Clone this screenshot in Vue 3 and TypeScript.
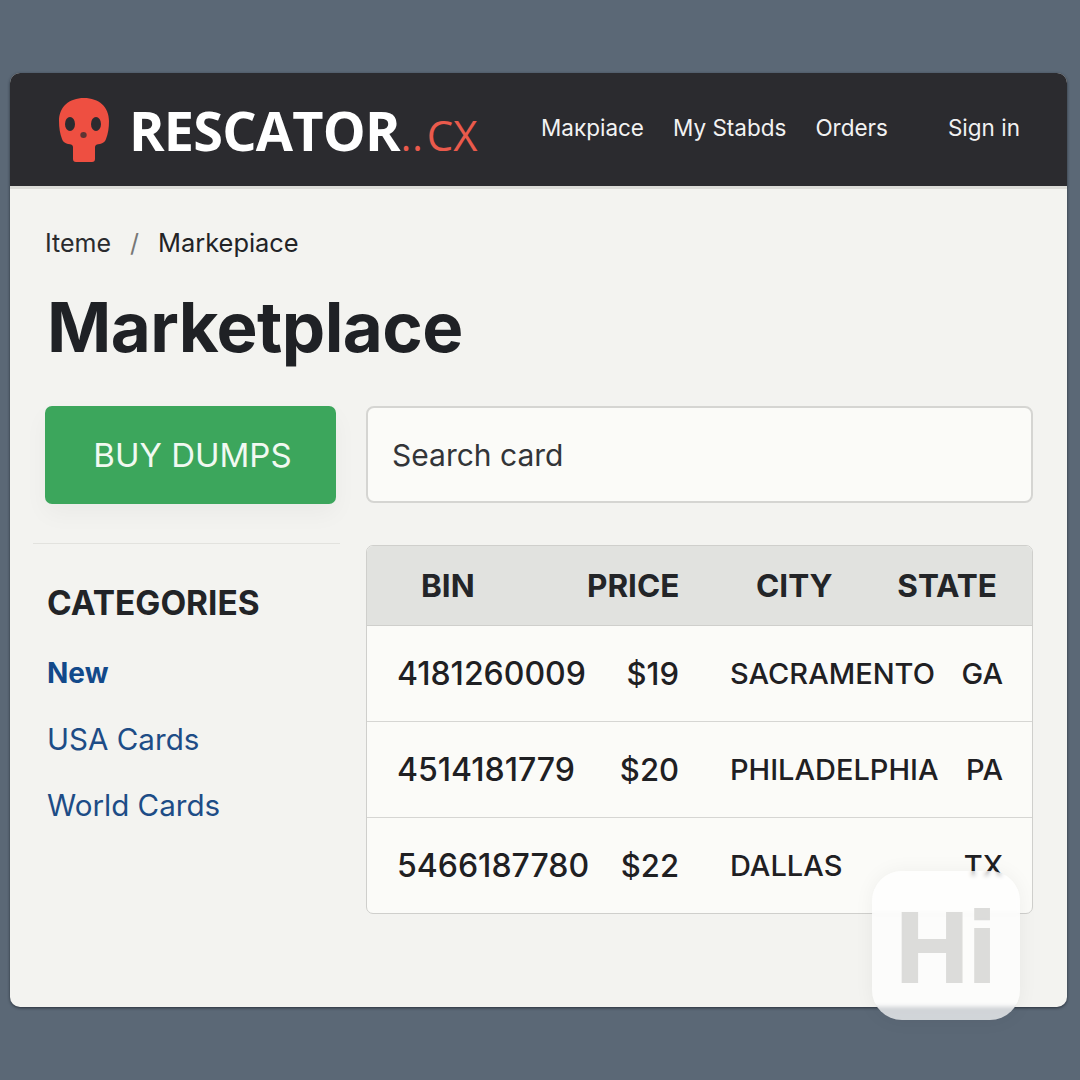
<template>
  <div class="page">
    <div class="window">
      <header class="topbar">
        <div class="brand">
          <svg class="skull" viewBox="0 0 52 64" width="52" height="64">
            <path
              fill="#ee4f41"
              d="M26 0C11 0 1 9 1 23c0 7 1 13 3 18 1 3 3 4 6 5 3 0 5 1 5 3v12c0 2 1 3 3 3h16c2 0 3-1 3-3V49c0-2 2-3 5-3 3-1 5-2 6-5 2-5 3-11 3-18C51 9 41 0 26 0z"
            />
            <ellipse cx="12" cy="26" rx="5" ry="7" fill="#2b2b2f" />
            <ellipse cx="38" cy="26" rx="5" ry="7" fill="#2b2b2f" />
            <ellipse cx="25.5" cy="37" rx="3.2" ry="3" fill="#2b2b2f" opacity="0.75" />
          </svg>
          <span class="brand-name">RESCATOR</span><span class="brand-dots">..</span><span class="brand-tld">CX</span>
        </div>
        <nav class="nav">
          <a class="nav-link">{{ navLinks[0] }}</a>
          <a class="nav-link">{{ navLinks[1] }}</a>
          <a class="nav-link">{{ navLinks[2] }}</a>
          <a class="nav-link sign-in">Sign in</a>
        </nav>
      </header>

      <main class="content">
        <div class="crumbs">
          <span>Iteme</span>
          <span class="sep">/</span>
          <span class="current">Markepiace</span>
        </div>
        <h1 class="title">Marketplace</h1>

        <div class="columns">
          <aside class="side">
            <button class="buy">BUY DUMPS</button>
            <div class="side-rule"></div>
            <h2 class="side-title">CATEGORIES</h2>
            <a
              v-for="cat in categories"
              :key="cat.label"
              :class="['cat', { active: cat.active }]"
            >
              {{ cat.label }}
            </a>
          </aside>

          <section class="main-col">
            <div class="search">Search card</div>
            <div class="table">
              <div class="thead">
                <span class="h-bin">BIN</span>
                <span class="h-price">PRICE</span>
                <span class="h-city">CITY</span>
                <span class="h-state">STATE</span>
              </div>
              <div v-for="row in rows" :key="row.bin" class="row">
                <span class="bin">{{ row.bin }}</span>
                <span class="price">{{ row.price }}</span>
                <span class="city">{{ row.city }}</span>
                <span class="state">{{ row.state }}</span>
              </div>
            </div>
          </section>
        </div>

        <div class="badge"><span class="badge-text">Hi</span></div>
      </main>
    </div>
  </div>
</template>

<script setup lang="ts">
const navLinks: string[] = ['Макpiace', 'My Stabds', 'Orders']

const categories: { label: string; active?: boolean }[] = [
  { label: 'New', active: true },
  { label: 'USA Cards' },
  { label: 'World Cards' },
]

const rows: { bin: string; price: string; city: string; state: string }[] = [
  { bin: '4181260009', price: '$19', city: 'SACRAMENTO', state: 'GA' },
  { bin: '4514181779', price: '$20', city: 'PHILADELPHIA', state: 'PA' },
  { bin: '5466187780', price: '$22', city: 'DALLAS', state: 'TX' },
]
</script>

<style>
html,
body {
  margin: 0;
  background: #5b6876;
}
</style>

<style scoped>
.page {
  width: 1080px;
  height: 1080px;
  box-sizing: border-box;
  padding: 73px 13px 73px 10px;
  background: #5b6876;
  font-family: Inter, "Liberation Sans", sans-serif;
  color: #1f2023;
}

.window {
  height: 934px;
  display: flex;
  flex-direction: column;
  border-radius: 10px;
  background: #f3f3f0;
  box-shadow: 0 1px 3px rgba(20, 25, 35, 0.7);
}

.topbar {
  height: 113px;
  flex: none;
  display: flex;
  align-items: center;
  padding: 0 47px 0 48px;
  background: #2b2b2f;
  border-radius: 10px 10px 0 0;
  border-bottom: 3px solid #dcdcd8;
  box-sizing: content-box;
  margin-bottom: -3px;
}

.brand {
  display: flex;
  align-items: baseline;
  position: relative;
  padding-left: 73px;
}

.skull {
  position: absolute;
  left: 0;
  top: 6px;
}

.brand-name {
  font-family: "Open Sans", sans-serif;
  font-size: 54px;
  font-weight: 700;
  line-height: 76px;
  letter-spacing: -0.8px;
  color: #fff;
  margin-left: -2px;
}

.brand-dots {
  font-family: "Open Sans", sans-serif;
  font-size: 40px;
  color: #ea5a4c;
  letter-spacing: 1px;
  margin-left: 1px;
}

.brand-tld {
  font-family: "Open Sans", sans-serif;
  font-size: 42px;
  font-weight: 400;
  color: #ea5a4c;
  letter-spacing: 0;
  margin-left: 3px;
}

.nav {
  margin-left: auto;
  display: flex;
  align-items: center;
  font-size: 22.5px;
  color: #f2f2f2;
  margin-top: -4px;
}

.nav-link {
  margin-left: 29px;
}

.nav-link.sign-in {
  margin-left: 60px;
}

.content {
  position: relative;
  flex: 1;
  padding: 40px 34px 0 35px;
}

.crumbs {
  display: flex;
  gap: 19px;
  font-size: 25px;
  line-height: 34px;
  color: #2a2b2e;
}

.sep {
  color: #777;
}

.current {
  color: #222326;
  font-size: 25.4px;
}

.title {
  margin: 26px 0 38px 2px;
  font-size: 69px;
  font-weight: 700;
  line-height: 82px;
  letter-spacing: -0.6px;
  color: #1f2125;
}

.columns {
  display: flex;
  gap: 30px;
}

.side {
  width: 291px;
  flex: none;
}

.buy {
  display: block;
  width: 100%;
  height: 98px;
  padding: 0 0 0 4px;
  border: none;
  border-radius: 7px;
  background: #3ca65c;
  color: #f1f9f1;
  font-family: inherit;
  font-size: 33px;
  box-shadow: 0 10px 24px rgba(0, 0, 0, 0.04);
}

.side-rule {
  height: 1px;
  margin: 39px -4px 0 -12px;
  background: #e2e2de;
}

.side-title {
  margin: 40px 0 31px 2px;
  font-size: 33.4px;
  font-weight: 700;
  line-height: 38px;
  color: #222427;
}

.cat {
  display: block;
  margin: 0 0 26px 2px;
  font-size: 29.6px;
  line-height: 40px;
  color: #1d4c86;
}

.cat.active {
  font-size: 28px;
  font-weight: 700;
  color: #12498a;
}

.main-col {
  flex: 1;
  min-width: 0;
}

.search {
  height: 97px;
  box-sizing: border-box;
  padding: 0 24px;
  display: flex;
  align-items: center;
  background: #fbfbf8;
  border: 2px solid #d5d5d2;
  border-radius: 8px;
  font-size: 30px;
  color: #333538;
}

.table {
  margin-top: 42px;
  border: 1px solid #cfcfcc;
  border-radius: 7px;
  background: #fbfbf8;
  overflow: hidden;
}

.thead,
.row {
  display: grid;
  align-items: center;
  padding: 0 29px 0 30px;
  font-size: 29px;
  font-weight: 500;
  grid-template-columns: 190px 92px minmax(0, 1fr) 70px;
}

.thead {
  height: 79px;
  background: #e1e2df;
  border-bottom: 1px solid #cfcfcc;
  font-size: 31.5px;
  font-weight: 700;
  color: #232528;
}

.h-bin {
  padding-left: 24px;
}

.h-price,
.price,
.h-state,
.state {
  text-align: right;
  white-space: nowrap;
}

.h-price {
  margin-right: 1px;
}

.h-state {
  direction: rtl;
  margin-right: 6px;
}

.h-city {
  padding-left: 77px;
}

.row {
  height: 95px;
  border-bottom: 1px solid #d6d6d3;
  color: #1f2023;
}

.row:last-child {
  border-bottom: none;
}

.bin {
  font-size: 32px;
  white-space: nowrap;
}

.price {
  font-size: 31px;
}

.city {
  padding-left: 51px;
  white-space: nowrap;
}

.badge {
  position: absolute;
  left: 862px;
  top: 685px;
  width: 148px;
  height: 149px;
  display: flex;
  align-items: center;
  justify-content: center;
  border-radius: 30px;
  background: rgba(255, 255, 255, 0.72);
  backdrop-filter: blur(2px);
  box-shadow: 0 0 20px rgba(0, 0, 0, 0.05);
}

.badge-text {
  font-family: "Liberation Sans", sans-serif;
  font-size: 100px;
  font-weight: 700;
  color: #dcdcda;
  line-height: 1;
  -webkit-text-stroke: 2px #dcdcda;
  margin-top: 3px;
}
</style>
